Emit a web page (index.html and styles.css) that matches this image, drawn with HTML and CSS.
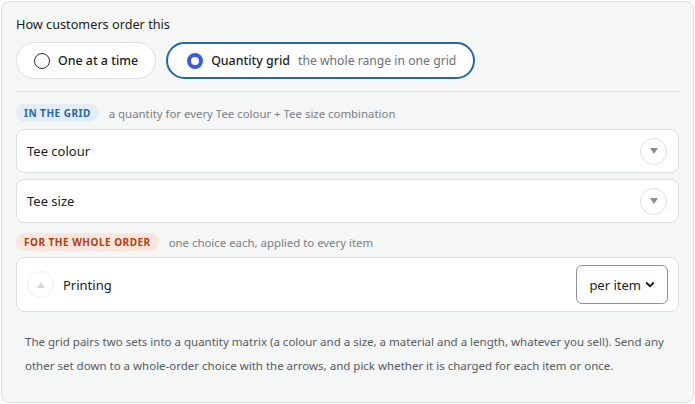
FILE: index.html
```html
<!DOCTYPE html>
<html lang="en">
<head>
    <meta charset="UTF-8">
    <meta name="viewport" content="width=device-width, initial-scale=1.0">
    <title>Order mode</title>
    <link rel="stylesheet" href="styles.css">
</head>
<body>
    <div class="panel">
        <div class="panel-title">How customers order this</div>

        <div class="modes">
            <button class="mode">
                <span class="radio"></span>
                <span class="mode-name">One at a time</span>
            </button>
            <button class="mode active">
                <span class="radio"></span>
                <span class="mode-name">Quantity grid</span>
                <span class="mode-hint">the whole range in one grid</span>
            </button>
        </div>

        <hr class="divider">

        <div class="group-head">
            <span class="tag tag-grid">In the grid</span>
            <span class="group-note">a quantity for every Tee colour + Tee size combination</span>
        </div>

        <div class="row">
            <span class="row-name">Tee colour</span>
            <button class="arrow-btn" title="Move down">
                <svg width="10" height="8" viewBox="0 0 10 8"><path d="M1 1h8L5 7z" fill="#8a8f96"/></svg>
            </button>
        </div>
        <div class="row">
            <span class="row-name">Tee size</span>
            <button class="arrow-btn" title="Move down">
                <svg width="10" height="8" viewBox="0 0 10 8"><path d="M1 1h8L5 7z" fill="#8a8f96"/></svg>
            </button>
        </div>

        <div class="group-head">
            <span class="tag tag-order">For the whole order</span>
            <span class="group-note">one choice each, applied to every item</span>
        </div>

        <div class="row row-tall">
            <button class="arrow-btn faded" title="Move up">
                <svg width="10" height="8" viewBox="0 0 10 8"><path d="M1 7h8L5 1z" fill="#d3d6da"/></svg>
            </button>
            <span class="row-name">Printing</span>
            <button class="charge">
                per item
                <svg width="10" height="7" viewBox="0 0 10 7"><path d="M1.2 1.5 5 5.2l3.8-3.7" fill="none" stroke="#1a1d21" stroke-width="1.8"/></svg>
            </button>
        </div>

        <p class="help">The grid pairs two sets into a quantity matrix (a colour and a size, a material and a length, whatever you sell). Send any other set down to a whole-order choice with the arrows, and pick whether it is charged for each item or once.</p>
    </div>
</body>
</html>
```

FILE: styles.css
```css
* {
    margin: 0;
    padding: 0;
    box-sizing: border-box;
}

body {
    font-family: 'Segoe UI', 'Noto Sans', 'Open Sans', sans-serif;
    color: #1a1d21;
    background: #fff;
    padding: 1px;
}

button {
    font: inherit;
    color: inherit;
    cursor: pointer;
}

.panel {
    width: 693px;
    height: 402px;
    background: #f5f6f6;
    border: 1px solid #dcdfe2;
    border-radius: 8px;
    padding: 12px 14px 0;
}

.panel-title {
    font-size: 12.7px;
    line-height: 20px;
}

.modes {
    display: flex;
    gap: 10px;
    margin-top: 8px;
}

.mode {
    display: flex;
    align-items: center;
    height: 37px;
    padding: 0 17px 0 17px;
    background: #fff;
    border: 1px solid #dcdfe2;
    border-radius: 20px;
    font-size: 12.4px;
}

.mode.active {
    border: 2px solid #2369a8;
    padding: 0 17px 0 19px;
}

.radio {
    width: 16px;
    height: 16px;
    border-radius: 50%;
    border: 1.5px solid #2a2d31;
    margin-right: 8px;
}

.mode.active .radio {
    border: 4px solid #3b5ddd;
}

.mode-name {
    font-weight: 500;
}

.mode-hint {
    color: #6b7178;
    margin-left: 8px;
    font-size: 12.2px;
}

.divider {
    border: none;
    border-top: 1px solid #dcdfe2;
    margin: 12px 0 12px;
}

.group-head {
    display: flex;
    align-items: center;
    gap: 10px;
    height: 18px;
    margin-bottom: 7px;
}

.tag {
    font-size: 10px;
    font-weight: 700;
    text-transform: uppercase;
    letter-spacing: 0.5px;
    line-height: 18px;
    padding: 0 8px;
    border-radius: 9px;
}

.tag-grid {
    background: #e3edf8;
    color: #2369a8;
}

.tag-order {
    background: #fbe5dc;
    color: #b23d0c;
}

.group-note {
    font-size: 11.4px;
    color: #7a8087;
}

.row {
    display: flex;
    align-items: center;
    height: 44px;
    background: #fff;
    border: 1px solid #dcdfe2;
    border-radius: 8px;
    padding: 0 11px 0 10px;
    margin-bottom: 6px;
}

.row + .group-head {
    margin-top: 10px;
    margin-bottom: 6px;
}

.row-name {
    flex: 1;
    font-size: 13px;
}

.arrow-btn {
    width: 27px;
    height: 27px;
    border-radius: 50%;
    border: 1px solid #dcdfe2;
    background: #fff;
    display: flex;
    align-items: center;
    justify-content: center;
}

.arrow-btn.faded {
    border-color: #eceef0;
    margin-right: 9px;
}

.row-tall {
    height: 55px;
    padding: 0 10px 0 10px;
}

.charge {
    display: flex;
    align-items: center;
    gap: 4px;
    height: 39px;
    padding: 0 12px 0 12px;
    background: #fff;
    border: 1px solid #8e939a;
    border-radius: 6px;
    font-size: 13px;
}

.help {
    font-size: 11.5px;
    line-height: 24px;
    color: #555b62;
    padding: 12px 9px 0;
}
```
